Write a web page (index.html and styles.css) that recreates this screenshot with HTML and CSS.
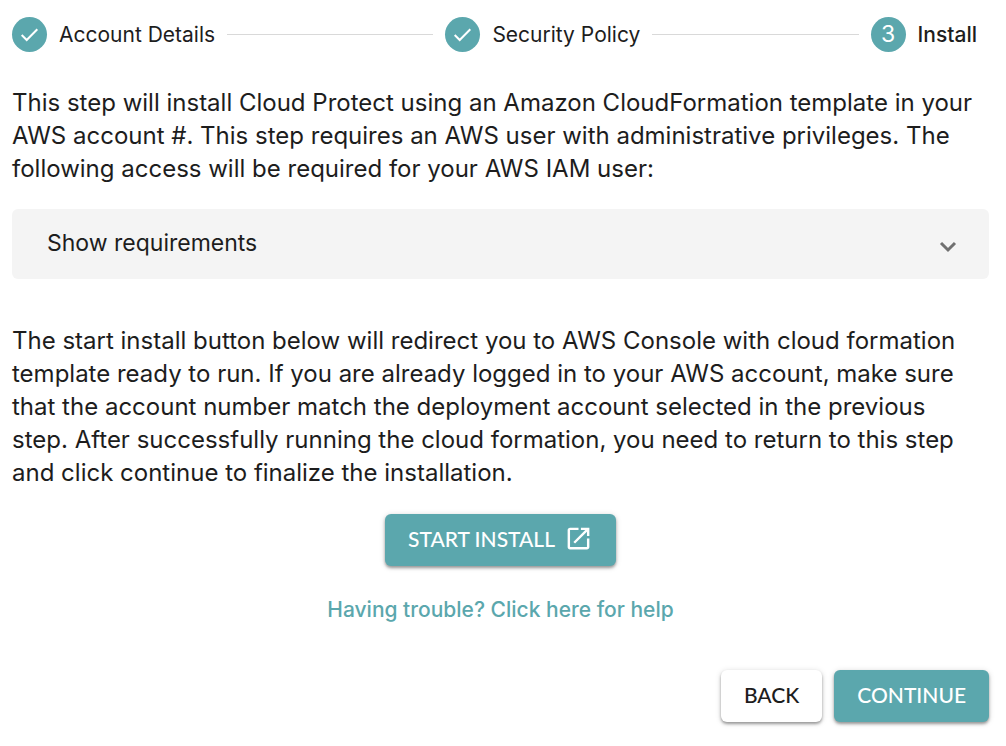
FILE: index.html
```html
<!DOCTYPE html>
<html lang="en">
<head>
<meta charset="utf-8">
<meta name="viewport" content="width=device-width, initial-scale=1">
<title>Install Cloud Protect</title>
<link rel="stylesheet" href="styles.css">
</head>
<body>
<main class="wizard">
  <ol class="stepper">
    <li class="step">
      <span class="step-icon"><svg viewBox="0 0 35 35" aria-hidden="true"><path d="M9.700 18l5 5L25.300 12.300"/></svg></span>
      <span class="step-label">Account Details</span>
    </li>
    <li class="connector" aria-hidden="true"></li>
    <li class="step">
      <span class="step-icon"><svg viewBox="0 0 35 35" aria-hidden="true"><path d="M9.700 18l5 5L25.300 12.300"/></svg></span>
      <span class="step-label">Security Policy</span>
    </li>
    <li class="connector" aria-hidden="true"></li>
    <li class="step step-active" aria-current="step">
      <span class="step-icon">3</span>
      <span class="step-label">Install</span>
    </li>
  </ol>
  <p class="text">This step will install Cloud Protect using an Amazon CloudFormation template in your AWS account #. This step requires an AWS user with administrative privileges. The following access will be required for your AWS IAM user:</p>
  <button class="accordion" type="button" aria-expanded="false">
    <span>Show requirements</span>
    <svg class="chevron" viewBox="0 0 18 12" aria-hidden="true"><path d="M2 2l7 7 7-7"/></svg>
  </button>
  <p class="text">The start install button below will redirect you to AWS Console with cloud formation template ready to run. If you are already logged in to your AWS account, make sure that the account number match the deployment account selected in the previous step. After successfully running the cloud formation, you need to return to this step and click continue to finalize the installation.</p>
  <div class="install">
    <button class="button button-primary" type="button">
      <span>START INSTALL</span>
      <svg class="launch" viewBox="0 0 24 24" aria-hidden="true"><path d="M19 19H5V5h7V3H5c-1.110 0-2 .9-2 2v14c0 1.100.89 2 2 2h14c1.100 0 2-.9 2-2v-7h-2v7zM14 3v2h3.590l-9.830 9.830 1.410 1.410L19 6.410V10h2V3h-7z"/></svg>
    </button>
    <a class="help" href="#help">Having trouble? Click here for help</a>
  </div>
  <div class="actions">
    <button class="button" type="button">BACK</button>
    <button class="button button-primary" type="button">CONTINUE</button>
  </div>
</main>
</body>
</html>
```
FILE: styles.css
```css
* {
  box-sizing: border-box;
}

body {
  margin: 0;
  background: #fff;
  color: #1d1d1d;
  font-family: Inter, "Open Sans", sans-serif;
}

.wizard {
  padding: 17px 17px 24px 12px;
}

.stepper {
  display: flex;
  align-items: center;
  gap: 12px;
  margin: 0 0 34px;
  padding: 0 12px 0 0;
  list-style: none;
}

.step {
  display: flex;
  align-items: center;
  gap: 12px;
  font-size: 21px;
  line-height: 33px;
}

.step-active .step-label {
  font-weight: 500;
}

.step-icon {
  display: grid;
  place-items: center;
  width: 35px;
  height: 35px;
  border-radius: 50%;
  background: #5ba7ad;
  color: #fff;
}

.step-active .step-icon {
  font-size: 23px;
}

.step-icon svg {
  width: 35px;
  height: 35px;
  fill: none;
  stroke: #fff;
  stroke-width: 2;
}

.connector {
  flex: 1;
  height: 1px;
  background: #d9d9d9;
}

.text {
  margin: 0;
  padding-right: 8px;
  font-size: 24px;
  line-height: 33px;
}

.accordion {
  display: flex;
  align-items: center;
  justify-content: space-between;
  width: 100%;
  height: 70px;
  margin: 24px 0 45px;
  padding: 0 32px 3px 35px;
  border: 0;
  border-radius: 6px;
  background: #f4f4f4;
  color: inherit;
  font: inherit;
  font-size: 23px;
}

.chevron {
  width: 18px;
  height: 12px;
  margin-top: 9px;
  fill: none;
  stroke: #707070;
  stroke-width: 3;
}

.install {
  display: flex;
  flex-direction: column;
  align-items: center;
  gap: 28px;
  margin: 25px 0 44px;
}

.button {
  display: flex;
  align-items: center;
  gap: 9px;
  height: 52px;
  padding: 0 23px 4px;
  border: 0;
  border-radius: 6px;
  background: #fff;
  box-shadow: 0 2px 3px rgba(0, 0, 0, .35), 0 1px 6px rgba(0, 0, 0, .14);
  color: #1d1d1d;
  font-family: Lato, "Open Sans", sans-serif;
  font-size: 21px;
  font-weight: 500;
}

.button-primary {
  background: #5ba7ad;
  color: #fff;
}

.launch {
  width: 29px;
  height: 29px;
  fill: currentColor;
}

.help {
  color: #5ba7ad;
  font-size: 21px;
  font-weight: 500;
  line-height: 32px;
  text-decoration: none;
}

.actions {
  display: flex;
  justify-content: flex-end;
  gap: 12px;
}
```
